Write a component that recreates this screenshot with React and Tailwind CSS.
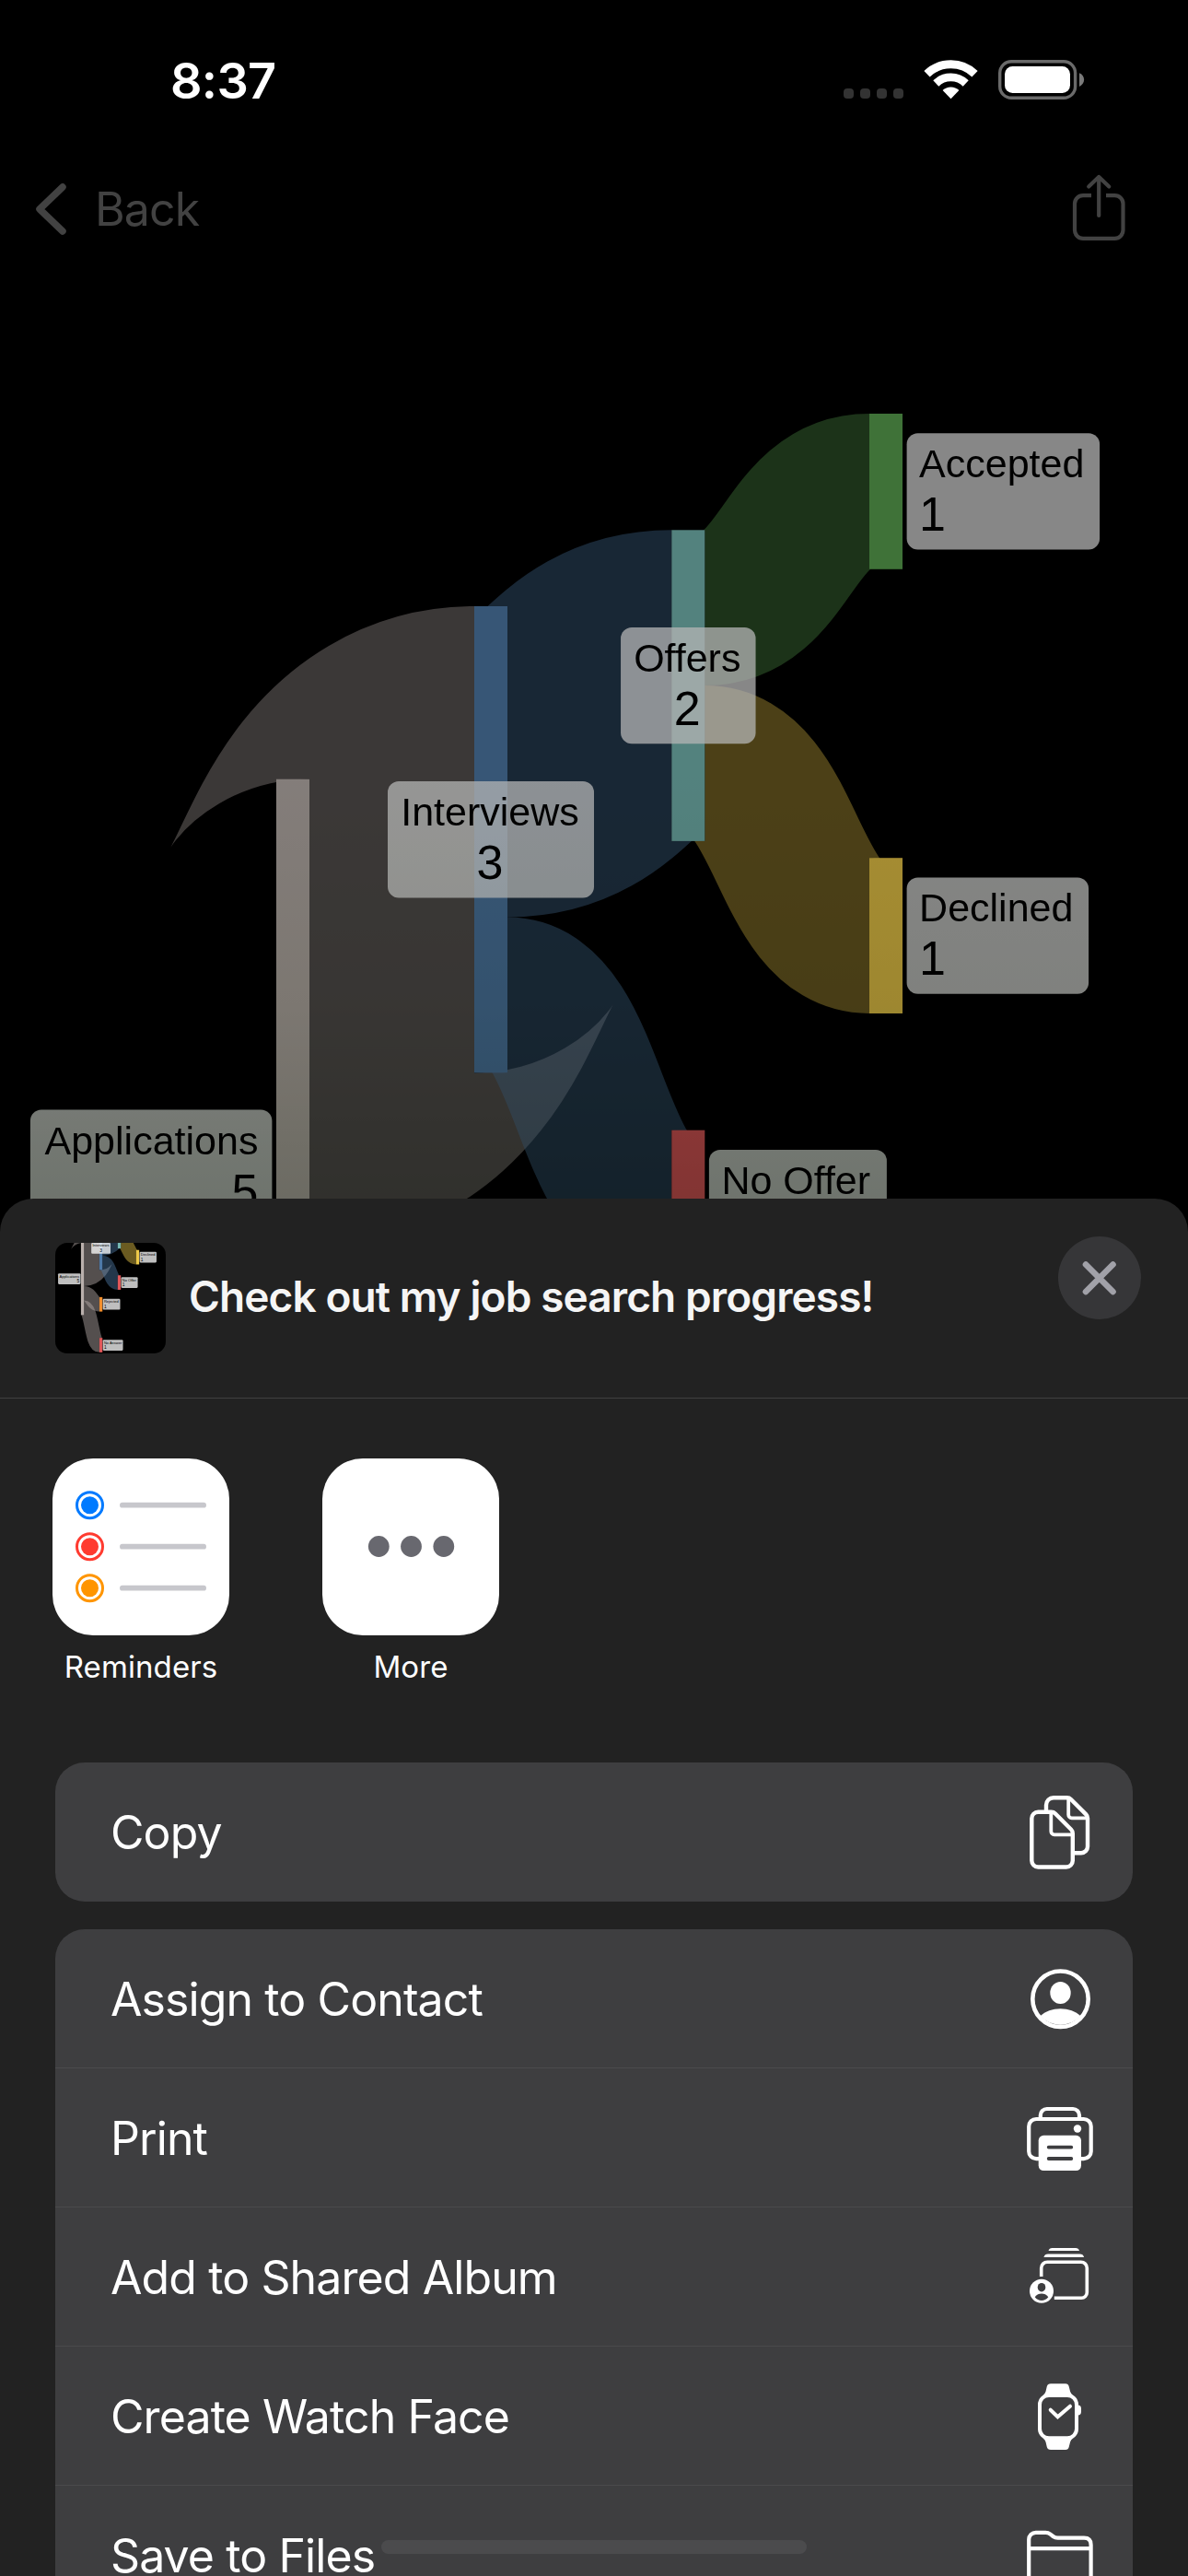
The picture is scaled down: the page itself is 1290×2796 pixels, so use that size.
import React from "react";

const UNIT = 168.8;
const NODE_W = 36;
const LABEL_H = 126.4;

const nodes = [
  { id: "app", name: "Applications", value: 5, x: 300, y: 845.7, color: "#bab0ac", side: "left" },
  { id: "int", name: "Interviews", value: 3, x: 515, y: 658, color: "#4e79a7", side: "center" },
  { id: "off", name: "Offers", value: 2, x: 729.3, y: 575.3, color: "#76b7b2", side: "center" },
  { id: "acc", name: "Accepted", value: 1, x: 944, y: 449, color: "#59a14f", side: "right" },
  { id: "dec", name: "Declined", value: 1, x: 944, y: 931.2, color: "#edc949", side: "right" },
  { id: "noo", name: "No Offer", value: 1, x: 729.3, y: 1226.7, color: "#e15759", side: "right" },
  { id: "rej", name: "Rejected", value: 1, x: 515, y: 1481, color: "#f28e2c", side: "right" },
  { id: "noa", name: "No Answer", value: 1, x: 515, y: 1957, color: "#e15759", side: "right" },
];

const links = [
  { from: "app", to: "int", value: 3, offset: 0, color: "#bab0ac" },
  { from: "app", to: "rej", value: 1, offset: 3, color: "#bab0ac" },
  { from: "app", to: "noa", value: 1, offset: 4, color: "#bab0ac" },
  { from: "int", to: "off", value: 2, offset: 0, color: "#4e79a7" },
  { from: "int", to: "noo", value: 1, offset: 2, color: "#4e79a7" },
  { from: "off", to: "acc", value: 1, offset: 0, color: "#59a14f" },
  { from: "off", to: "dec", value: 1, offset: 1, color: "#edc949" },
];

const labelWidth = {
  Applications: 262.5,
  Interviews: 224,
  Offers: 146.5,
  Accepted: 209.5,
  Declined: 197.5,
  "No Offer": 193,
  Rejected: 202,
  "No Answer": 235,
};

const byId = Object.fromEntries(nodes.map((n) => [n.id, n]));

function linkPath({ from, to, value, offset }) {
  const a = byId[from];
  const b = byId[to];
  const x0 = a.x + NODE_W;
  const x1 = b.x;
  const y0 = a.y + (offset + value / 2) * UNIT;
  const y1 = b.y + (value / 2) * UNIT;
  const m = (x0 + x1) / 2;
  return `M${x0},${y0}C${m},${y0} ${m},${y1} ${x1},${y1}`;
}

const labelTop = (node) => node.y + (node.value * UNIT) / 2 - LABEL_H / 2;

function NodeLabel({ node }) {
  const w = labelWidth[node.name];
  const top = labelTop(node);
  let left = node.x + NODE_W + 4.6;
  let anchor = "start";
  let tx = left + 13.5;
  if (node.side === "left") {
    left = node.x - 4.6 - w;
    anchor = "end";
    tx = left + w - 15;
  }
  if (node.side === "center") {
    left = node.x + NODE_W / 2 - w / 2;
    anchor = "middle";
    tx = left + w / 2 - 1;
  }
  return (
    <g>
      <rect x={left} y={top} width={w} height={LABEL_H} rx="12" fill="#fff" fillOpacity="0.75" />
      <text x={tx} y={top + 48} fontSize="43" textAnchor={anchor}>{node.name}</text>
      <text x={tx} y={top + 106} fontSize="52" textAnchor={anchor}>{node.value}</text>
    </g>
  );
}

function Sankey({ top, height, className }) {
  const labelled = nodes.filter((n) => labelTop(n) + LABEL_H > top && labelTop(n) < top + height);
  return (
    <svg viewBox={`0 ${top} 1290 ${height}`} className={className} fontFamily='"Liberation Sans", Helvetica, sans-serif'>
      {links.map((l) => (
        <path key={l.from + l.to} d={linkPath(l)} fill="none" stroke={l.color} strokeOpacity="0.45" strokeWidth={l.value * UNIT} />
      ))}
      {nodes.map((n) => (
        <rect key={n.id} x={n.x} y={n.y} width={NODE_W} height={n.value * UNIT} fill={n.color} />
      ))}
      {labelled.map((n) => (
        <NodeLabel key={n.id} node={n} />
      ))}
    </svg>
  );
}

function StatusBar() {
  return (
    <header className="flex h-[173px] items-start justify-between pl-[185px] pr-[112px]">
      <div className="mt-[56px] text-[54px] leading-[64px] font-semibold tracking-[-0.7px] text-white">8:37</div>
      <svg viewBox="914 64 264 45" className="mt-[64px] h-[45px] w-[264px]">
        {[916, 934, 952, 970].map((x) => (
          <rect key={x} x={x} y="96" width="11" height="11" rx="4" fill="#333" />
        ))}
        <g fill="none" stroke="#fff">
          <path d="M1006.500 80.300a37.500 37.500 0 0 1 52 0" strokeWidth="9" />
          <path d="M1016.300 90.500a23.300 23.300 0 0 1 32.400 0" strokeWidth="8.700" />
        </g>
        <path d="M1032.500 107.200l-8.900-9.100a12.600 12.600 0 0 1 17.800 0z" fill="#fff" />
        <rect x="1085.700" y="66.700" width="81.900" height="39.600" rx="12.500" fill="none" stroke="#6a6a6a" strokeWidth="3.400" />
        <rect x="1091" y="72" width="71" height="29" rx="8.500" fill="#fff" />
        <path d="M1172 79.300v14.600c3.300-1.400 5.100-4 5.100-7.300s-1.800-5.900-5.100-7.300z" fill="#7a7a7a" />
      </svg>
    </header>
  );
}

function NavBar() {
  return (
    <nav className="flex h-[108px] items-center justify-between pl-[35px] pr-[67px] text-[#424242]">
      <div className="flex items-center">
        <svg viewBox="0 0 38 62" className="h-[62px] w-[38px]" fill="none" stroke="currentColor" strokeWidth="7.500" strokeLinecap="round" strokeLinejoin="round">
          <path d="M33 7L8 31L33 55" />
        </svg>
        <span className="ml-[30px] text-[50px] leading-[60px] tracking-[-0.9px]">Back</span>
      </div>
      <svg viewBox="1163 188 60 76" className="mt-[-2px] h-[76px] w-[60px]" fill="none" stroke="currentColor" strokeWidth="4.200" strokeLinecap="round" strokeLinejoin="round">
        <path strokeLinecap="butt" d="M1185 212.100h-9a9 9 0 0 0-9 9v28.700a9 9 0 0 0 9 9h34.500a9 9 0 0 0 9-9v-28.700a9 9 0 0 0-9-9h-9.500" />
        <path d="M1193.200 234v-41.500M1182.200 202.500l11-10.500 11 10.500" />
      </svg>
    </nav>
  );
}

const ICON = "h-[90px] w-[90px]";

function CopyIcon() {
  return (
    <svg viewBox="0 0 90 90" className={ICON} fill="none" stroke="#fff" strokeWidth="4.400" strokeLinejoin="round">
      <path d="M26 22.500v-7.300a8 8 0 0 1 8-8h14.600a6 6 0 0 1 4.300 1.800l16.400 16.400a6 6 0 0 1 1.700 4.200v30.600a7 7 0 0 1-7 7h-8" />
      <path d="M50.200 8v17.800a3.500 3.500 0 0 0 3.500 3.500h17" strokeWidth="3.800" />
      <path d="M17.300 22.700h14.300a6 6 0 0 1 4.300 1.800l17.200 17.200a6 6 0 0 1 1.700 4.200v29.600a7 7 0 0 1-7 7H17.300a7 7 0 0 1-7-7V29.700a7 7 0 0 1 7-7z" />
      <path d="M31.300 23.500v20.300a3.500 3.500 0 0 0 3.500 3.500h19.200" strokeWidth="3.800" />
    </svg>
  );
}

function ContactIcon() {
  return (
    <svg viewBox="0 -0.500 90 90" className={ICON}>
      <circle cx="41.500" cy="45.200" r="30.200" fill="none" stroke="#fff" strokeWidth="4.600" />
      <ellipse cx="41.500" cy="38.500" rx="11.200" ry="12.100" fill="#fff" />
      <path d="M19.500 63.800C25 58.500 33 55.800 41.500 55.800s16.500 2.700 22 8a30.500 30.500 0 0 1-44 0z" fill="#fff" />
    </svg>
  );
}

function PrintIcon() {
  return (
    <svg viewBox="0 -2 90 90" className={ICON} fill="none" stroke="#fff" strokeWidth="4.200">
      <path d="M19.800 23.500v-4.500a7 7 0 0 1 7-7h28.200a7 7 0 0 1 7 7v4.500" />
      <path d="M18.500 66.200h-3.300a8 8 0 0 1-8-8V31a8 8 0 0 1 8-8h51.500a8 8 0 0 1 8 8v27.200a8 8 0 0 1-8 8h-3.700" />
      <circle cx="60" cy="33.500" r="4.200" fill="#fff" stroke="none" />
      <rect x="17.700" y="40.800" width="46.300" height="38.200" rx="5.500" fill="#fff" stroke="none" />
      <path d="M28.700 53.600h24.600M28.700 66h24.600" stroke="#3e3e40" strokeWidth="3.800" strokeLinecap="round" />
    </svg>
  );
}

function AlbumIcon() {
  return (
    <svg viewBox="0 -3.700 90 90" className={ICON}>
      <path d="M32.500 10.200h25.500q3.200 0 4 3.200h-33.500q.8-3.200 4-3.200zM28 16.800h34.500q3.600 0 4.600 3.400h-43.700q1-3.400 4.600-3.400z" fill="#fff" />
      <path d="M20.700 41.300V32a6.500 6.500 0 0 1 6.500-6.500h36.600a6.500 6.500 0 0 1 6.500 6.500v26.500a6 6 0 0 1-6 6H34.800" fill="none" stroke="#fff" strokeWidth="3.600" />
      <circle cx="21" cy="57" r="13" fill="#fff" />
      <ellipse cx="21" cy="53" rx="4.300" ry="4.800" fill="#3e3e40" />
      <path d="M13.700 63.500c2-2.500 4.500-3.600 7.300-3.600s5.300 1.100 7.300 3.600c-2 2.500-4.500 3.800-7.300 3.800s-5.300-1.300-7.300-3.800z" fill="#3e3e40" />
    </svg>
  );
}

function WatchIcon() {
  return (
    <svg viewBox="0 -4.200 90 90" className={ICON}>
      <path d="M31 6h16q3 0 3.700 3l1.400 5.500q.7 2.500 3 4H22.500q2.300-1.500 3-4L26.800 9Q27.500 6 31 6zM31 77.700h16q3 0 3.700-3l1.400-5.500q.7-2.500 3-4H22.500q2.300 1.500 3 4l1.300 5.500q.7 3 4.200 3z" fill="#fff" />
      <rect x="19" y="18.700" width="40" height="46.400" rx="10" fill="#3e3e40" stroke="#fff" strokeWidth="4" />
      <path d="M60.500 29.200q3.500.3 3.500 3.800v3.500q0 3.500-3.500 3.800z" fill="#fff" />
      <path d="M30.700 34.500l7.800 7.500L52 30.500" fill="none" stroke="#fff" strokeWidth="4" strokeLinecap="round" />
    </svg>
  );
}

function FolderIcon() {
  return (
    <svg viewBox="0 -5.800 90 90" className={ICON} fill="none" stroke="#fff" strokeWidth="4.200">
      <path d="M7.200 70V21.500a7.500 7.500 0 0 1 7.500-7.500h10.500q3 0 5.300 1.800l3 2.400q2.200 1.700 5 1.700h28.600q7.500 0 7.500 7.500V70a6 6 0 0 1-6 6H13.200a6 6 0 0 1-6-6zM7.200 31.300h67.400" />
    </svg>
  );
}

function Row({ label, icon, divided }) {
  return (
    <div className={divided ? "flex h-[151px] items-center justify-between border-b border-[#4a4a4c] pl-[60px] pr-[30px]" : "flex h-[151px] items-center justify-between pl-[60px] pr-[30px]"}>
      <span className="pt-px text-[50px] leading-[60px] tracking-[-0.9px] text-white">{label}</span>
      {icon}
    </div>
  );
}

function AppTile({ label, children }) {
  return (
    <div className="flex w-[192px] flex-col items-center">
      <div className="h-[192px] w-[192px] overflow-hidden rounded-[44px] bg-white">{children}</div>
      <span className="mt-[14px] text-[33px] leading-[40px] tracking-[0.1px] text-white">{label}</span>
    </div>
  );
}

function RemindersGlyph() {
  const items = [["#007aff", 50.7], ["#ff3b30", 95.7], ["#ff9500", 140.7]];
  return (
    <svg viewBox="0 0 192 192" className="h-full w-full">
      {items.map(([c, y]) => (
        <g key={c}>
          <circle cx="40.500" cy={y} r="14" fill="none" stroke={c} strokeWidth="3" />
          <circle cx="40.500" cy={y} r="9.500" fill={c} />
          <rect x="73" y={y - 2.9} width="94" height="5.800" rx="2.900" fill="#c7c7cc" />
        </g>
      ))}
    </svg>
  );
}

function MoreGlyph() {
  return (
    <svg viewBox="0 0 192 192" className="h-full w-full" fill="#68686f">
      <circle cx="61.300" cy="95.500" r="11.400" />
      <circle cx="96.500" cy="95.500" r="11.400" />
      <circle cx="131.800" cy="95.500" r="11.400" />
    </svg>
  );
}

function ShareSheet() {
  return (
    <section className="relative h-[1495px] shrink-0 overflow-hidden rounded-t-[36px] bg-[#222222]">
      <div className="flex h-[217px] items-start border-b border-[#404040] pl-[60px] pr-[51px]">
        <div className="mt-[48px] h-[120px] w-[120px] shrink-0 overflow-hidden rounded-[13px] bg-black">
          <Sankey top={848} height={1290} className="h-full w-full" />
        </div>
        <h1 className="mt-[78px] ml-[25px] grow text-[46px] leading-[56px] font-semibold tracking-[-0.9px] whitespace-nowrap text-[#f5f5f5]">
          Check out my job search progress!
        </h1>
        <button className="mt-[41px] flex h-[90px] w-[90px] items-center justify-center rounded-full bg-[#363638]">
          <svg viewBox="0 0 40 40" className="h-[40px] w-[40px]" stroke="#a1a1a8" strokeWidth="6.600" strokeLinecap="round">
            <path d="M5 5.500L34.500 35M34.500 5.500L5 35" />
          </svg>
        </button>
      </div>
      <div className="flex gap-[101px] pt-[65px] pl-[57px]">
        <AppTile label="Reminders"><RemindersGlyph /></AppTile>
        <AppTile label="More"><MoreGlyph /></AppTile>
      </div>
      <div className="mx-[60px] mt-[84px] overflow-hidden rounded-[32px] bg-[#3e3e40]">
        <Row label="Copy" icon={<CopyIcon />} />
      </div>
      <div className="mx-[60px] mt-[30px] overflow-hidden rounded-t-[32px] bg-[#3e3e40]">
        <Row label="Assign to Contact" icon={<ContactIcon />} divided />
        <Row label="Print" icon={<PrintIcon />} divided />
        <Row label="Add to Shared Album" icon={<AlbumIcon />} divided />
        <Row label="Create Watch Face" icon={<WatchIcon />} divided />
        <Row label="Save to Files" icon={<FolderIcon />} />
      </div>
      <div className="absolute bottom-[24px] left-[414px] h-[15px] w-[462px] rounded-full bg-[#4b4b4d]" />
    </section>
  );
}

export default function App() {
  return (
    <main className="flex h-[2796px] w-[1290px] flex-col overflow-hidden bg-black font-['Inter',sans-serif]">
      <StatusBar />
      <NavBar />
      <div className="relative isolate h-[1020px] shrink-0 bg-black">
        <div className="h-[1060px] bg-black">
          <Sankey top={281} height={1060} className="h-[1060px] w-[1290px] opacity-[0.71]" />
        </div>
        <div className="absolute inset-x-0 top-[560px] h-[500px] bg-linear-to-b from-white via-[#f0f3ed] to-[#cbd6c8] mix-blend-multiply" />
        {/* Extends the chart's black backdrop behind the sheet's rounded corners */}
      </div>
      <ShareSheet />
    </main>
  );
}
